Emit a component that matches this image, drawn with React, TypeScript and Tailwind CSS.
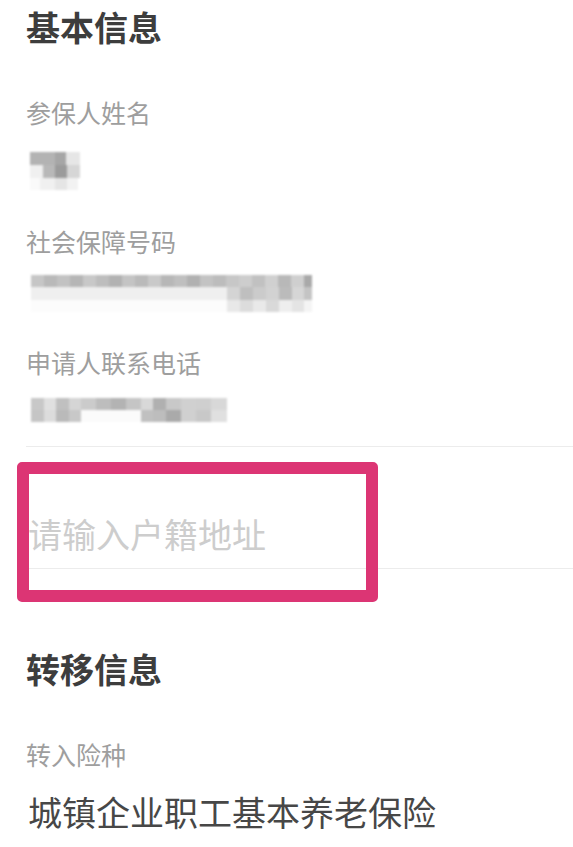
type Cell = [number, string];
type Row = { h: string; cells: Cell[] };

// pixelated / mosaic blur over private values
const nameBlur: Row[] = [
  { h: 'h-[13px]', cells: [[25, 'bg-[#b3b3b3]'], [11, 'bg-[#a6a6a6]'], [14, 'bg-[#e6e6e6]']] },
  { h: 'h-[13px]', cells: [[13, 'bg-[#f0f0f0]'], [12, 'bg-[#b8b8b8]'], [12, 'bg-[#9b9b9b]'], [13, 'bg-[#d6d6d6]']] },
  { h: 'h-[12px]', cells: [[10, 'bg-[#fafafa]'], [15, 'bg-[#f0f0f0]'], [12, 'bg-[#e5e5e5]'], [11, 'bg-[#f2f2f2]']] },
];

const ssnBlur: Row[] = [
  {
    h: 'h-[12px]',
    cells: [
      [13, 'bg-[#c6c6c6]'], [13, 'bg-[#b9b9b9]'], [13, 'bg-[#c2c2c2]'], [13, 'bg-[#b6b6b6]'], [13, 'bg-[#c8c8c8]'],
      [13, 'bg-[#bdbdbd]'], [13, 'bg-[#b2b2b2]'], [13, 'bg-[#c4c4c4]'], [13, 'bg-[#bababa]'], [13, 'bg-[#c9c9c9]'],
      [13, 'bg-[#b7b7b7]'], [13, 'bg-[#bfbfbf]'], [13, 'bg-[#b1b1b1]'], [13, 'bg-[#c3c3c3]'], [13, 'bg-[#bcbcbc]'],
      [13, 'bg-[#c7c7c7]'], [13, 'bg-[#cdcdcd]'], [13, 'bg-[#c1c1c1]'], [13, 'bg-[#d0d0d0]'], [13, 'bg-[#b8b8b8]'],
      [13, 'bg-[#cfcfcf]'], [8, 'bg-[#a9a9a9]'],
    ],
  },
  {
    h: 'h-[13px]',
    cells: [
      [196, 'bg-[#efefef]'], [13, 'bg-[#d4d4d4]'], [13, 'bg-[#bfbfbf]'], [13, 'bg-[#cbcbcb]'], [13, 'bg-[#d2d2d2]'],
      [13, 'bg-[#bbbbbb]'], [12, 'bg-[#d6d6d6]'], [8, 'bg-[#c4c4c4]'],
    ],
  },
  {
    h: 'h-[12px]',
    cells: [
      [196, 'bg-[#fcfcfc]'], [13, 'bg-[#e8e8e8]'], [13, 'bg-[#dcdcdc]'], [13, 'bg-[#e9e9e9]'], [13, 'bg-[#d9d9d9]'],
      [13, 'bg-[#eeeeee]'], [12, 'bg-[#e4e4e4]'], [8, 'bg-[#f4f4f4]'],
    ],
  },
];

const phoneBlur: Row[] = [
  {
    h: 'h-[12px]',
    cells: [
      [13, 'bg-[#c8c8c8]'], [12, 'bg-[#e0e0e0]'], [13, 'bg-[#c0c0c0]'], [12, 'bg-[#d5d5d5]'], [15, 'bg-[#cbcbcb]'],
      [15, 'bg-[#bdbdbd]'], [15, 'bg-[#b3b3b3]'], [15, 'bg-[#c5c5c5]'], [12, 'bg-[#d8d8d8]'], [13, 'bg-[#b0b0b0]'],
      [15, 'bg-[#c8c8c8]'], [15, 'bg-[#d0d0d0]'], [15, 'bg-[#cfcfcf]'], [16, 'bg-[#d8d8d8]'],
    ],
  },
  {
    h: 'h-[12px]',
    cells: [
      [13, 'bg-[#c5c5c5]'], [12, 'bg-[#dcdcdc]'], [13, 'bg-[#bababa]'], [12, 'bg-[#c8c8c8]'], [60, 'bg-[#fbfbfb]'],
      [12, 'bg-[#c0c0c0]'], [13, 'bg-[#bdbdbd]'], [15, 'bg-[#aaaaaa]'], [15, 'bg-[#d0d0d0]'], [15, 'bg-[#c8c8c8]'],
      [16, 'bg-[#e0e0e0]'],
    ],
  },
];

function Mosaic({ rows }: { rows: Row[] }) {
  return (
    <div className="flex flex-col blur-[1px]">
      {rows.map((row, i) => (
        <div key={i} className={`flex ${row.h}`}>
          {row.cells.map(([w, cls], j) => (
            <div key={j} className={`h-full ${cls}`} style={{ width: w }} />
          ))}
        </div>
      ))}
    </div>
  );
}

export default function App() {
  return (
    <main
      className="min-h-[847px] w-[573px] bg-white pl-[26px] overflow-hidden"
      style={{ fontFamily: '"Noto Sans CJK SC", "Noto Sans", sans-serif' }}
    >
      {/* 基本信息 */}
      <h2 className="pt-[10px] text-[34px] leading-none font-bold text-[#3d3d3d]">基本信息</h2>

      <div className="mt-[56px] text-[25px] leading-none text-[#9e9e9e]">参保人姓名</div>
      <div className="mt-[27px] pl-[4px] h-[43px]">
        <Mosaic rows={nameBlur} />
      </div>

      <div className="mt-[34px] text-[25px] leading-none text-[#9e9e9e]">社会保障号码</div>
      <div className="mt-[21px] pl-[5px] h-[45px]">
        <Mosaic rows={ssnBlur} />
      </div>

      <div className="mt-[30px] text-[25px] leading-none text-[#9e9e9e]">申请人联系电话</div>
      <div className="mt-[23px] pl-[5px] h-[27px]">
        <Mosaic rows={phoneBlur} />
      </div>

      <div className="mt-[21px] h-px bg-[#ececec]" />

      {/* 户籍地址 input, highlighted */}
      <div className="relative">
        <div className="pt-[70px] pb-[17px] pl-[2px] text-[34px] leading-none text-[#cdcdcd]">请输入户籍地址</div>
        <div className="h-px bg-[#ececec]" />
        <div className="absolute left-[-9px] top-[15px] w-[361px] h-[140px] rounded-[5px] border-[12px] border-[#dc3574]" />
      </div>

      {/* 转移信息 */}
      <h2 className="mt-[83px] text-[34px] leading-none font-bold text-[#3d3d3d]">转移信息</h2>

      <div className="mt-[56px] text-[25px] leading-none text-[#9e9e9e]">转入险种</div>
      <div className="mt-[28px] pl-[2px] text-[34px] leading-none text-[#474747]">城镇企业职工基本养老保险</div>
    </main>
  );
}
